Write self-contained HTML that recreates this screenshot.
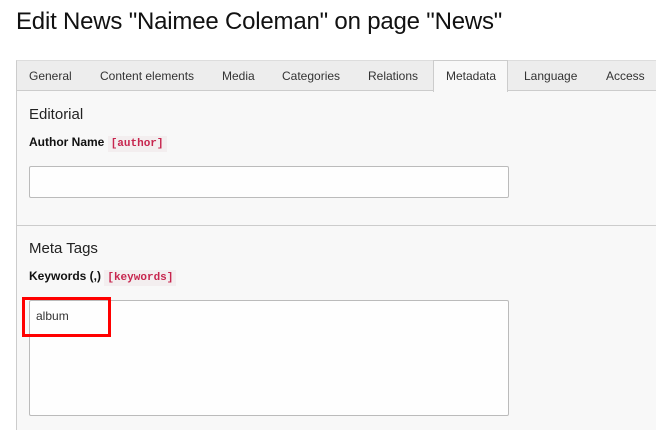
<!DOCTYPE html>
<html><head><style>
body{margin:0;width:656px;height:430px;background:#fff;font-family:"Liberation Sans",sans-serif;overflow:hidden;position:relative;color:#000}
.a{position:absolute}
h1{position:absolute;left:16px;top:8px;margin:0;font-weight:normal;font-size:24px;color:#111;white-space:nowrap;letter-spacing:-0.2px}
.tabs{left:16px;top:60px;width:640px;height:31px;background:#ededed;border-top:1px solid #ddd;border-left:1px solid #ccc;border-bottom:1px solid #ccc;box-sizing:border-box}
.tab{position:absolute;top:69px;font-size:12px;color:#333}
.act{left:433px;top:60px;width:75px;height:32px;background:#f8f8f8;border:1px solid #ccc;border-bottom:none;box-sizing:border-box}
.panel{left:16px;top:91px;width:640px;height:339px;background:#f8f8f8;border-left:1px solid #ccc;box-sizing:border-box}
.h{font-size:15px;color:#222}
.lbl{font-size:12px;font-weight:bold;color:#111}
code{font-family:"Liberation Mono",monospace;font-size:11px;color:#c7254e;background:#f3eeef;padding:2px 3px;font-weight:bold}
.inp{background:#fefefe;border:1px solid #bbb;border-radius:2px;box-sizing:border-box}
</style></head><body>
<h1>Edit News "Naimee Coleman" on page "News"</h1>
<div class="a tabs"></div>
<div class="a panel"></div>
<div class="a act"></div>
<div class="tab" style="left:29px">General</div>
<div class="tab" style="left:100px">Content elements</div>
<div class="tab" style="left:222px">Media</div>
<div class="tab" style="left:282px">Categories</div>
<div class="tab" style="left:368px">Relations</div>
<div class="tab" style="left:446px">Metadata</div>
<div class="tab" style="left:524px">Language</div>
<div class="tab" style="left:606px">Access</div>
<div class="a h" style="left:29px;top:106px">Editorial</div>
<div class="a lbl" style="left:29px;top:135px">Author Name <code>[author]</code></div>
<div class="a inp" style="left:29px;top:166px;width:480px;height:32px"></div>
<div class="a" style="left:17px;top:225px;width:639px;height:1px;background:#ccc"></div>
<div class="a h" style="left:29px;top:240px">Meta Tags</div>
<div class="a lbl" style="left:29px;top:269px">Keywords (,) <code>[keywords]</code></div>
<div class="a inp" style="left:29px;top:300px;width:480px;height:116px"></div>
<div class="a" style="left:36px;top:309px;font-size:12px;color:#333">album</div>
<div class="a" style="left:22px;top:297px;width:89px;height:40px;border:3px solid #f00;box-sizing:border-box"></div>
</body></html>
